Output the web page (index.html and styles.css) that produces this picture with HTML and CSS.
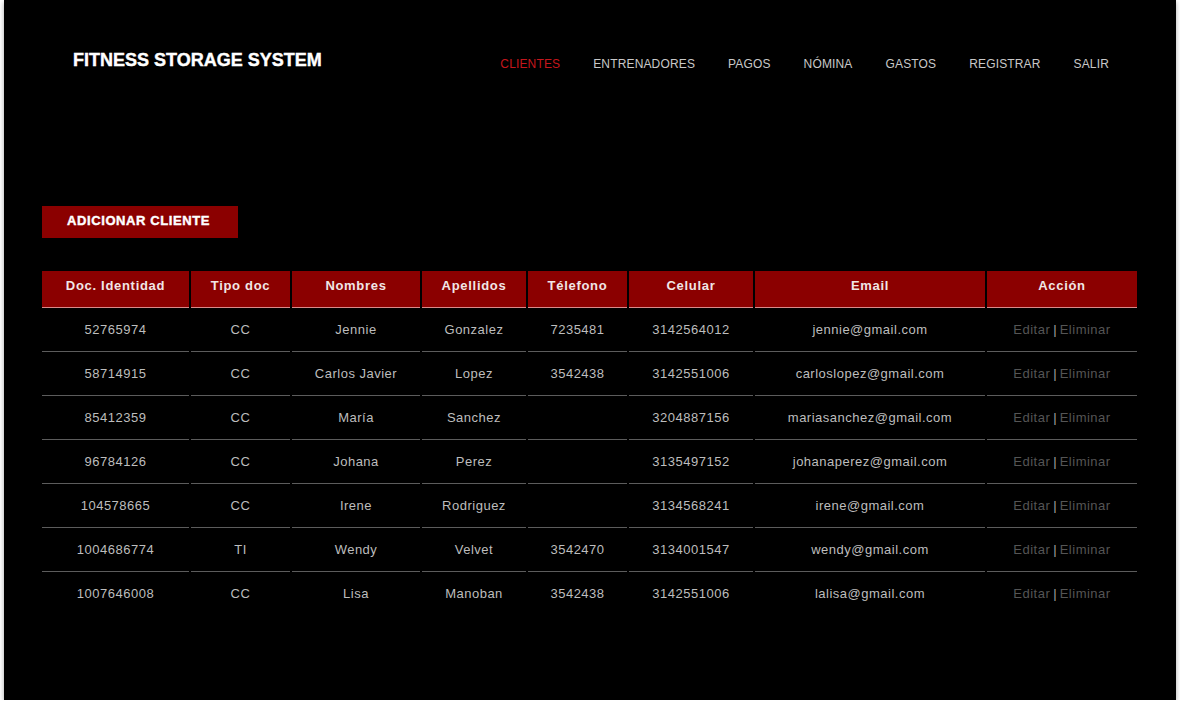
FILE: index.html
```html
<!DOCTYPE html>
<html lang="es">
<head>
<meta charset="utf-8">
<title>Fitness Storage System</title>
<link rel="stylesheet" href="styles.css">
</head>
<body>
<div class="page">
  <header class="topbar">
    <h1 class="brand">FITNESS STORAGE SYSTEM</h1>
    <nav class="nav">
      <a class="nav-link active" href="#">CLIENTES</a>
      <a class="nav-link" href="#">ENTRENADORES</a>
      <a class="nav-link" href="#">PAGOS</a>
      <a class="nav-link" href="#">NÓMINA</a>
      <a class="nav-link" href="#">GASTOS</a>
      <a class="nav-link" href="#">REGISTRAR</a>
      <a class="nav-link" href="#">SALIR</a>
    </nav>
  </header>
  <main class="content">
    <a class="btn-add" href="#">ADICIONAR CLIENTE</a>
    <table class="clients">
      <colgroup>
        <col class="c-doc"><col class="c-tipo"><col class="c-nom"><col class="c-ape"><col class="c-tel"><col class="c-cel"><col class="c-mail"><col class="c-acc">
      </colgroup>
      <thead>
        <tr><th>Doc. Identidad</th><th>Tipo doc</th><th>Nombres</th><th>Apellidos</th><th>Télefono</th><th>Celular</th><th>Email</th><th>Acción</th></tr>
      </thead>
      <tbody>
        <tr><td>52765974</td><td>CC</td><td>Jennie</td><td>Gonzalez</td><td>7235481</td><td>3142564012</td><td>jennie@gmail.com</td><td class="act"><span class="lnk">Editar</span><span class="sep">|</span><span class="lnk">Eliminar</span></td></tr>
        <tr><td>58714915</td><td>CC</td><td>Carlos Javier</td><td>Lopez</td><td>3542438</td><td>3142551006</td><td>carloslopez@gmail.com</td><td class="act"><span class="lnk">Editar</span><span class="sep">|</span><span class="lnk">Eliminar</span></td></tr>
        <tr><td>85412359</td><td>CC</td><td>María</td><td>Sanchez</td><td></td><td>3204887156</td><td>mariasanchez@gmail.com</td><td class="act"><span class="lnk">Editar</span><span class="sep">|</span><span class="lnk">Eliminar</span></td></tr>
        <tr><td>96784126</td><td>CC</td><td>Johana</td><td>Perez</td><td></td><td>3135497152</td><td>johanaperez@gmail.com</td><td class="act"><span class="lnk">Editar</span><span class="sep">|</span><span class="lnk">Eliminar</span></td></tr>
        <tr><td>104578665</td><td>CC</td><td>Irene</td><td>Rodriguez</td><td></td><td>3134568241</td><td>irene@gmail.com</td><td class="act"><span class="lnk">Editar</span><span class="sep">|</span><span class="lnk">Eliminar</span></td></tr>
        <tr><td>1004686774</td><td>TI</td><td>Wendy</td><td>Velvet</td><td>3542470</td><td>3134001547</td><td>wendy@gmail.com</td><td class="act"><span class="lnk">Editar</span><span class="sep">|</span><span class="lnk">Eliminar</span></td></tr>
        <tr><td>1007646008</td><td>CC</td><td>Lisa</td><td>Manoban</td><td>3542438</td><td>3142551006</td><td>lalisa@gmail.com</td><td class="act"><span class="lnk">Editar</span><span class="sep">|</span><span class="lnk">Eliminar</span></td></tr>
      </tbody>
    </table>
  </main>
</div>
</body>
</html>
```
FILE: styles.css
```css
* { box-sizing: border-box; }
html, body { margin: 0; padding: 0; background: #ffffff; }
body { font-family: "Liberation Sans", Arial, sans-serif; }

.page {
  width: 1172px;
  height: 700px;
  margin-left: 4px;
  background: #000;
  box-shadow: 0 2px 5px rgba(0, 0, 0, 0.35);
  overflow: hidden;
}

.topbar {
  display: flex;
  justify-content: space-between;
  align-items: flex-start;
  height: 71px;
  padding: 49px 67px 0 69px;
}

.brand {
  margin: 0;
  font-size: 18px;
  line-height: 22px;
  font-weight: 700;
  color: #fff;
  -webkit-text-stroke: 0.4px #fff;
  letter-spacing: 0;
}

.nav {
  display: flex;
  gap: 33px;
  margin-top: 7px;
}

.nav-link {
  font-size: 12px;
  line-height: 16px;
  color: #c8c8c8;
  text-decoration: none;
  letter-spacing: 0.15px;
}

.nav-link.active { color: #c4161c; }

.content {
  padding: 0 0 0 36px;
  margin-top: 135px;
}

.btn-add {
  display: block;
  width: 196px;
  height: 32px;
  margin-left: 2px;
  padding-left: 25px;
  background: #8b0000;
  color: #fff;
  font-size: 13px;
  font-weight: 700;
  line-height: 30px;
  letter-spacing: 0.6px;
  text-decoration: none;
  -webkit-text-stroke: 0.4px #fff;
}

.clients {
  margin-top: 33px;
  border-collapse: separate;
  border-spacing: 2px 0;
  table-layout: fixed;
  width: 1099px;
}

.c-doc { width: 147px; }
.c-tipo { width: 99px; }
.c-nom { width: 128px; }
.c-ape { width: 104px; }
.c-tel { width: 99px; }
.c-cel { width: 124px; }
.c-mail { width: 230px; }
.c-acc { width: 150px; }

.clients th {
  background: #8b0000;
  color: #f1e6e6;
  font-size: 13px;
  font-weight: 700;
  letter-spacing: 0.7px;
  line-height: 16px;
  padding: 7px 0 13px;
  text-align: center;
  border-bottom: 1px solid #d98a8a;
}

.clients td {
  color: #bdbdbd;
  font-size: 13px;
  letter-spacing: 0.5px;
  line-height: 16px;
  padding: 14px 0 13px;
  text-align: center;
  border-bottom: 1px solid #5c5c5c;
  white-space: nowrap;
}

.clients tbody tr:last-child td { border-bottom-color: #000; }

.clients td.act .lnk { color: #555; }
.clients td.act .sep { color: #a0a0a0; margin: 0 3px; letter-spacing: 0; }
```
